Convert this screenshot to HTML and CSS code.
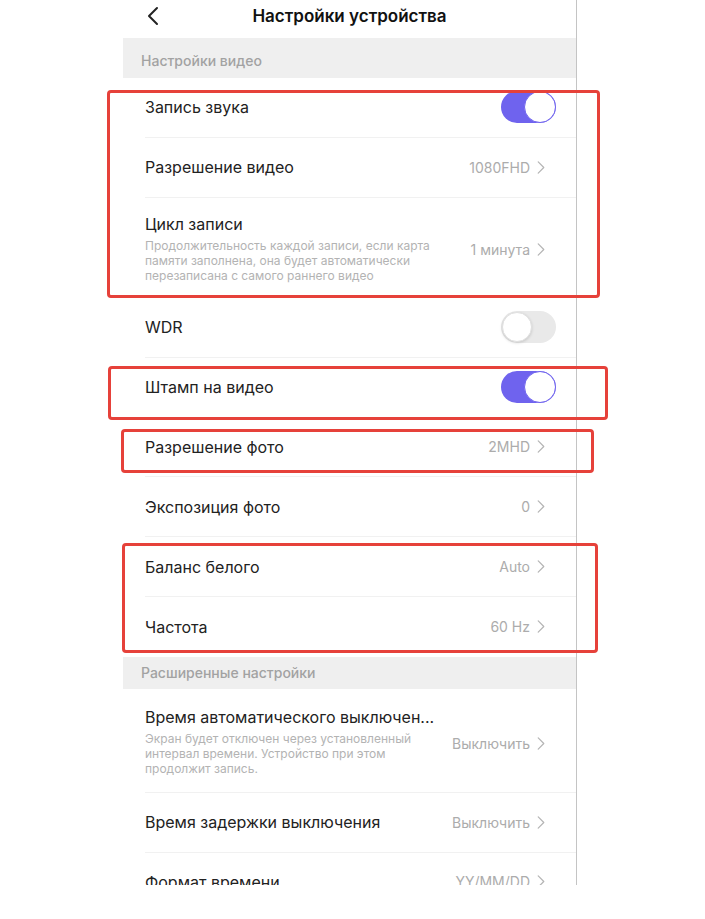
FILE: index.html
```html
<!DOCTYPE html>
<html lang="ru">
<head>
    <meta charset="UTF-8">
    <meta name="viewport" content="width=device-width, initial-scale=1.0">
    <title>Настройки устройства</title>
    <link rel="stylesheet" href="styles.css">
</head>
<body>
    <div class="page">
        <div class="screen">
            <div class="nav">
                <svg class="back" width="12" height="20" viewBox="0 0 12 20">
                    <path d="M10 2 L2 10 L10 18" fill="none" stroke="#222" stroke-width="2" stroke-linecap="round" stroke-linejoin="round"/>
                </svg>
                <div class="nav-title">Настройки устройства</div>
            </div>

            <div class="section-head first">Настройки видео</div>

            <div class="row">
                <div class="row-main"><div class="row-title">Запись звука</div></div>
                <div class="switch on"><span class="knob"></span></div>
            </div>
            <div class="row">
                <div class="row-main"><div class="row-title">Разрешение видео</div></div>
                <div class="row-value">1080FHD <svg class="chev" viewBox="0 0 8 14"><path d="M1 1 L7 7 L1 13"/></svg></div>
            </div>
            <div class="row tall">
                <div class="row-main">
                    <div class="row-title">Цикл записи</div>
                    <div class="row-desc">Продолжительность каждой записи, если карта<br>памяти заполнена, она будет автоматически<br>перезаписана с самого раннего видео</div>
                </div>
                <div class="row-value">1 минута <svg class="chev" viewBox="0 0 8 14"><path d="M1 1 L7 7 L1 13"/></svg></div>
            </div>
            <div class="row">
                <div class="row-main"><div class="row-title">WDR</div></div>
                <div class="switch"><span class="knob"></span></div>
            </div>
            <div class="row">
                <div class="row-main"><div class="row-title">Штамп на видео</div></div>
                <div class="switch on"><span class="knob"></span></div>
            </div>
            <div class="row">
                <div class="row-main"><div class="row-title">Разрешение фото</div></div>
                <div class="row-value">2MHD <svg class="chev" viewBox="0 0 8 14"><path d="M1 1 L7 7 L1 13"/></svg></div>
            </div>
            <div class="row">
                <div class="row-main"><div class="row-title">Экспозиция фото</div></div>
                <div class="row-value">0 <svg class="chev" viewBox="0 0 8 14"><path d="M1 1 L7 7 L1 13"/></svg></div>
            </div>
            <div class="row">
                <div class="row-main"><div class="row-title">Баланс белого</div></div>
                <div class="row-value">Auto <svg class="chev" viewBox="0 0 8 14"><path d="M1 1 L7 7 L1 13"/></svg></div>
            </div>
            <div class="row last">
                <div class="row-main"><div class="row-title">Частота</div></div>
                <div class="row-value">60 Hz <svg class="chev" viewBox="0 0 8 14"><path d="M1 1 L7 7 L1 13"/></svg></div>
            </div>

            <div class="section-head">Расширенные настройки</div>

            <div class="row tall second">
                <div class="row-main">
                    <div class="row-title">Время автоматического выключен...</div>
                    <div class="row-desc">Экран будет отключен через установленный<br>интервал времени. Устройство при этом<br>продолжит запись.</div>
                </div>
                <div class="row-value">Выключить <svg class="chev" viewBox="0 0 8 14"><path d="M1 1 L7 7 L1 13"/></svg></div>
            </div>
            <div class="row">
                <div class="row-main"><div class="row-title">Время задержки выключения</div></div>
                <div class="row-value">Выключить <svg class="chev" viewBox="0 0 8 14"><path d="M1 1 L7 7 L1 13"/></svg></div>
            </div>
            <div class="row">
                <div class="row-main"><div class="row-title">Формат времени</div></div>
                <div class="row-value">YY/MM/DD <svg class="chev" viewBox="0 0 8 14"><path d="M1 1 L7 7 L1 13"/></svg></div>
            </div>
        </div>

        <!-- annotation frames -->
        <div class="mark mark-1"></div>
        <div class="mark mark-2"></div>
        <div class="mark mark-3"></div>
        <div class="mark mark-4"></div>
    </div>
</body>
</html>
```

FILE: styles.css
```css
body {
    margin: 0;
    background: #fff;
    font-family: 'Inter', 'Noto Sans', sans-serif;
    color: #1c1c1c;
}
.page {
    position: relative;
    height: 919px;
    overflow: hidden;
}
.screen {
    margin-left: 123px;
    width: 453px;
    height: 885px;
    overflow: hidden;
    border-right: 1px solid #c4c4c4;
    background: #fff;
}
.nav {
    height: 38px;
    display: flex;
    align-items: center;
    justify-content: center;
    position: relative;
}
.back {
    position: absolute;
    left: 24px;
    top: 6px;
}
.nav-title {
    font-size: 17px;
    font-weight: 600;
    color: #111;
    margin-top: -6px;
}
.section-head {
    height: 32px;
    background: #efefef;
    color: #a2a2a2;
    font-size: 14px;
    font-weight: 500;
    padding-left: 18px;
    display: flex;
    align-items: center;
}
.section-head.first {
    height: 40px;
    padding-top: 5px;
    box-sizing: border-box;
}
.row {
    margin-left: 22px;
    padding-right: 21px;
    height: 59.8px;
    box-sizing: border-box;
    border-bottom: 1px solid #f1f1f1;
    display: flex;
    align-items: center;
    justify-content: space-between;
}
.row.last {
    border-bottom: none;
}
.row.tall {
    height: 100.4px;
    align-items: flex-start;
    padding-top: 15px;
}
.row.tall.second {
    height: 104px;
    padding-top: 17px;
}
.row-title {
    font-size: 16px;
    line-height: 22px;
    color: #222;
}
.row-desc {
    margin-top: 3px;
    font-size: 12px;
    line-height: 15.3px;
    color: #b3b3b3;
}
.row.tall .row-value {
    margin-top: 28px;
}
.row.tall.second .row-value {
    margin-top: 29px;
}
.row-value {
    display: flex;
    align-items: center;
    gap: 7px;
    font-size: 14px;
    color: #acacac;
    padding-right: 10px;
    white-space: nowrap;
}
.chev {
    width: 8px;
    height: 13px;
}
.chev path {
    fill: none;
    stroke: #b4b4b4;
    stroke-width: 1.3;
    stroke-linecap: round;
    stroke-linejoin: round;
}
.switch {
    width: 55px;
    height: 32px;
    border-radius: 16px;
    background: #e9e9e9;
    position: relative;
    box-sizing: border-box;
    margin-right: -1px;
}
.switch .knob {
    position: absolute;
    left: 1px;
    top: 1px;
    width: 30px;
    height: 30px;
    border-radius: 50%;
    background: #fff;
    box-sizing: border-box;
    border: 1px solid #e0e0e0;
    box-shadow: 0 1px 3px rgba(0, 0, 0, 0.15);
}
.switch.on {
    background: #6f63ee;
}
.switch.on .knob {
    left: auto;
    right: 0;
    top: 0;
    width: 32px;
    height: 32px;
    border: 1.5px solid #6f63ee;
    box-shadow: none;
}
.mark {
    position: absolute;
    border: 3px solid #e6413a;
    border-radius: 4px;
    box-sizing: border-box;
}
.mark-1 {
    left: 107px;
    top: 90px;
    width: 493px;
    height: 208px;
}
.mark-2 {
    left: 108px;
    top: 366px;
    width: 500px;
    height: 54px;
}
.mark-3 {
    left: 121px;
    top: 429px;
    width: 473px;
    height: 44px;
}
.mark-4 {
    left: 122px;
    top: 543px;
    width: 476px;
    height: 110px;
}
```
